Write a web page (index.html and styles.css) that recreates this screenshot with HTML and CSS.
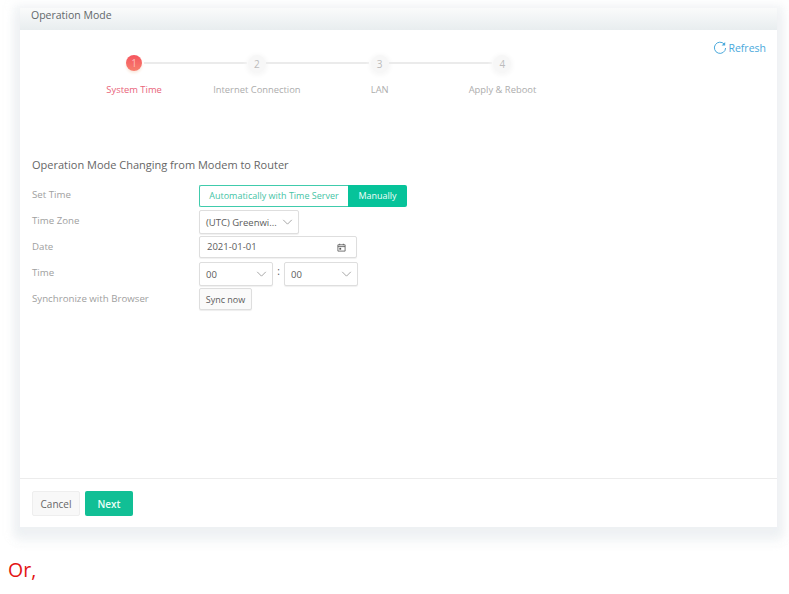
FILE: index.html
```html
<!DOCTYPE html>
<html lang="en">
<head>
<meta charset="utf-8">
<title>Operation Mode</title>
<link rel="stylesheet" href="styles.css">
</head>
<body>
<div class="frame">
  <div class="frame-title">Operation Mode</div>
  <main class="card">
    <div class="card-body">
      <a class="refresh">
        <svg class="refresh-icon" viewBox="0 0 14 14" aria-hidden="true"><path d="M11.3 3.2A5.6 5.6 0 1 0 12.6 7"/><path class="fill" d="M12.2 0.9v3.6H8.6z"/></svg>
        <span>Refresh</span>
      </a>
      <ol class="steps">
        <li class="step active"><span class="dot">1</span><span class="step-label">System Time</span></li>
        <li class="step"><span class="dot">2</span><span class="step-label">Internet Connection</span></li>
        <li class="step"><span class="dot">3</span><span class="step-label">LAN</span></li>
        <li class="step"><span class="dot">4</span><span class="step-label">Apply &amp; Reboot</span></li>
      </ol>
      <h2 class="form-title">Operation Mode Changing from Modem to Router</h2>
      <div class="form">
        <div class="row row-set">
          <span class="label">Set Time</span>
          <div class="toggle"><span class="toggle-off">Automatically with Time Server</span><span class="toggle-on">Manually</span></div>
        </div>
        <div class="row row-zone">
          <span class="label">Time Zone</span>
          <div class="select zone"><span>(UTC) Greenwi...</span><svg class="chev" viewBox="0 0 12 7"><path d="M1 1l5 5 5-5"/></svg></div>
        </div>
        <div class="row row-date">
          <span class="label">Date</span>
          <div class="select date"><span class="date-text">2021-01-01</span>
            <svg class="cal" viewBox="0 0 10 10"><path d="M1 2h8v7H1zM1 4h8M3 .8v1.6M7 .8v1.6"/><rect x="2.6" y="5.4" width="2" height="2"/></svg>
          </div>
        </div>
        <div class="row row-time">
          <span class="label">Time</span>
          <div class="time">
            <div class="select hour"><span>00</span><svg class="chev" viewBox="0 0 12 7"><path d="M1 1l5 5 5-5"/></svg></div>
            <span class="colon">:</span>
            <div class="select hour"><span>00</span><svg class="chev" viewBox="0 0 12 7"><path d="M1 1l5 5 5-5"/></svg></div>
          </div>
        </div>
        <div class="row row-sync">
          <span class="label">Synchronize with Browser</span>
          <button class="sync" type="button">Sync now</button>
        </div>
      </div>
    </div>
    <footer class="card-footer">
      <button class="btn btn-cancel" type="button">Cancel</button>
      <button class="btn btn-next" type="button">Next</button>
    </footer>
  </main>
</div>
<p class="or">Or,</p>
</body>
</html>
```
FILE: styles.css
```css
* { box-sizing: border-box; }
html, body { margin: 0; padding: 0; }
body {
  width: 789px;
  height: 594px;
  overflow: hidden;
  background: #fff;
  font-family: "Open Sans", "Noto Sans", sans-serif;
  color: #555;
}
.frame {
  margin: 8px 12px 0 20px;
  width: 757px;
  background: linear-gradient(#fafbfb, #e8edef 22px);
  box-shadow: 0 3px 8px 6px rgba(232, 236, 239, .5), 0 10px 10px 5px rgba(236, 240, 242, .55);
}
.frame-title {
  height: 22px;
  padding: 0 0 0 11px;
  font-size: 10.5px;
  line-height: 14px;
  color: #62676a;
}
.card {
  height: 497px;
  background: #fff;
  display: flex;
  flex-direction: column;
}
.card-body {
  position: relative;
  flex: 1;
  padding: 25px 12px 0;
}
.refresh {
  position: absolute;
  top: 10px;
  right: 11px;
  display: flex;
  align-items: center;
  gap: 1px;
  font-size: 10.5px;
  line-height: 16px;
  color: #4aa9dc;
}
.refresh-icon { width: 14px; height: 14px; }
.refresh-icon path { fill: none; stroke: #4aa9dc; stroke-width: 1; }
.refresh-icon path.fill { fill: #4aa9dc; stroke: none; }
.steps {
  list-style: none;
  margin: 0 0 0 40.7px;
  padding: 0;
  display: grid;
  grid-template-columns: repeat(4, 122.8px);
}
.step {
  position: relative;
  display: flex;
  flex-direction: column;
  align-items: center;
}
.step:not(:last-child)::after {
  content: "";
  position: absolute;
  left: 71px;
  width: 103px;
  top: 7px;
  height: 2px;
  background: #ebebeb;
}
.dot {
  width: 18px;
  height: 18px;
  border-radius: 50%;
  background: #f7f7f7;
  box-shadow: 0 1px 4px 2px #f8f8f8;
  color: #bcbcbc;
  font-size: 10px;
  line-height: 18px;
  text-align: center;
}
.step.active .dot {
  width: 16px;
  height: 16px;
  margin: 0 0 2px;
  line-height: 16px;
  color: #fbb;
  background: linear-gradient(#f5555f, #f77f6d);
  box-shadow: 0 2px 3px #f9e8dd;
}
.step-label {
  margin-top: 10px;
  font-size: 9.4px;
  line-height: 14px;
  color: #adadad;
  white-space: nowrap;
}
.step.active .step-label { color: #e9647a; }
.form-title {
  margin: 59px 0 0;
  font-weight: 400;
  font-size: 11px;
  line-height: 18px;
  color: #666;
}
.form { margin-top: 11px; }
.row { display: flex; align-items: flex-start; }
.label {
  width: 167px;
  font-size: 9.7px;
  line-height: 14px;
  color: #a0a0a0;
}
.row-set { height: 25px; }
.row-set .label { margin-top: 3px; }
.row-zone { height: 26px; }
.row-zone .label { margin-top: 4px; }
.row-date { height: 26px; }
.row-date .label { margin-top: 4px; }
.row-time { height: 26px; }
.row-time .label { margin-top: 4px; }
.row-sync .label { margin-top: 4px; }
.toggle {
  display: flex;
  height: 22px;
  font-size: 9px;
  line-height: 20px;
}
.toggle-off {
  width: 149px;
  border: 1px solid #40cbac;
  border-right: 0;
  border-radius: 2px 0 0 2px;
  color: #45c4a6;
  text-align: center;
}
.toggle-on {
  width: 59px;
  background: #06c39a;
  border-radius: 0 2px 2px 0;
  color: #f2fffb;
  text-align: center;
  line-height: 22px;
}
.select {
  display: flex;
  align-items: center;
  justify-content: space-between;
  background: #fff;
  border: 1px solid #dedede;
  border-radius: 2px;
  box-shadow: 0 1px 1px #f0f0f0;
  font-size: 9.5px;
  color: #5c5c5c;
}
.zone { width: 100px; height: 24px; padding: 0 3px 0 6px; }
.date { width: 158px; height: 22px; padding: 0 10px 0 7px; }
.date-text { position: relative; top: -1px; }
.hour { width: 74px; height: 24px; padding: 0 3px 0 6px; }
.time { display: flex; }
.colon {
  width: 11px;
  text-align: center;
  font-size: 10px;
  line-height: 18px;
  color: #555;
}
.chev { width: 11px; height: 6px; margin-right: 2px; }
.chev path { fill: none; stroke: #8c8c8c; stroke-width: .9; }
.cal { width: 9px; height: 9px; }
.cal path { fill: none; stroke: #555; stroke-width: .9; }
.cal rect { fill: #555; }
.sync {
  width: 53px;
  height: 22px;
  padding: 0;
  background: #fafafa;
  border: 1px solid #dedede;
  border-radius: 2px;
  box-shadow: 0 1px 1px #eee;
  font: inherit;
  font-size: 9px;
  color: #5c5c5c;
}
.card-footer {
  display: flex;
  gap: 5px;
  height: 49px;
  padding: 12px 12px 0;
  border-top: 1px solid #ececec;
}
.btn {
  width: 48px;
  height: 25px;
  padding: 0;
  border-radius: 2px;
  font: inherit;
  font-size: 10px;
}
.btn-cancel { background: #f8f8f8; border: 1px solid #eeeeee; color: #666; }
.btn-next { background: #11bf95; border: 0; color: #eafff8; font-weight: 600; }
.or {
  margin: 29px 0 0 8px;
  font-size: 19.5px;
  line-height: 27px;
  color: #e31414;
}
```
